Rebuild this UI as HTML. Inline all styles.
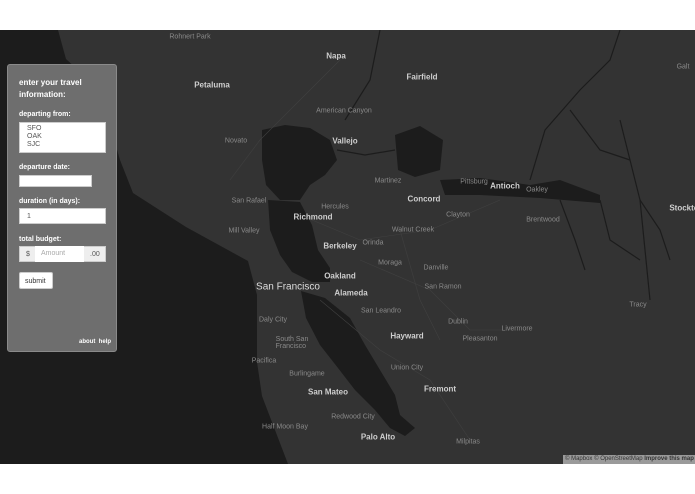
<!DOCTYPE html>
<html><head><meta charset="utf-8"><style>
html,body{margin:0;padding:0;width:695px;height:494px;overflow:hidden;background:#fff;font-family:"Liberation Sans",sans-serif}
#map{position:absolute;left:0;top:30px;width:695px;height:434px;background:#333;overflow:hidden}
svg{position:absolute;left:0;top:0}
.l{position:absolute;color:#8a8a8a;font-size:7px;white-space:nowrap;transform:translate(-50%,-50%)}
.b{color:#cfcfcf;font-size:8px;font-weight:bold}
.c{color:#ddd;font-size:10px}
#panel{position:absolute;left:7px;top:64px;width:110px;height:288px;background:#6e6e6e;border:1px solid #8a8a8a;border-radius:3px;box-sizing:border-box;color:#fff;font-size:7px;font-weight:bold}
.in{position:absolute;background:#fff;border:1px solid #ccc;box-sizing:border-box;color:#555;font-weight:normal}
#attr{position:absolute;left:563px;top:455px;width:132px;height:9px;background:#9a9a9a;color:#333;font-size:6px;line-height:9px;padding-left:2px;box-sizing:border-box;white-space:nowrap}
</style></head><body>
<div id="map">
<svg width="695" height="434" viewBox="0 30 695 434">
<path fill="#1c1c1c" d="M0 30 L58 30 L66 59 L100 90 L120 160 L133 193 L186 227 L248 261 L257 295 L257 362 L262 396 L275 430 L288 464 L0 464 Z"/>
<path fill="#1c1c1c" d="M262 130 L285 125 L310 128 L330 140 L337 160 L325 175 L310 185 L300 200 L280 200 L266 185 L262 160 Z"/>
<path fill="#1c1c1c" d="M268 200 L300 202 L312 225 L318 250 L330 268 L330 282 L312 282 L292 272 L280 255 L270 230 Z"/>
<path fill="#1c1c1c" d="M301 291 L325 298 L350 318 L365 345 L380 370 L395 395 L400 415 L415 428 L405 436 L390 428 L375 410 L355 390 L338 368 L320 345 L306 318 Z"/>
<path fill="#1c1c1c" d="M395 135 L420 126 L443 140 L440 170 L415 177 L398 170 Z"/>
<path fill="#1c1c1c" d="M440 180 L480 178 L530 185 L560 180 L600 195 L600 203 L540 198 L480 195 L445 195 Z"/>
<g stroke="#1c1c1c" stroke-width="1.2" fill="none">
<path d="M530 180 L545 130 L580 90 L610 60 L620 30"/><path d="M560 200 L575 240 L585 270"/><path d="M600 200 L610 240 L640 260"/><path d="M640 200 L660 230 L670 260"/><path d="M337 150 L365 155 L395 150"/><path d="M380 30 L370 80 L345 120"/><path d="M620 120 L640 200 L650 300"/><path d="M570 110 L600 150 L630 160"/>
</g>
<g stroke="#404040" stroke-width="0.6" fill="none">
<path d="M300 215 L360 240 L430 230 L500 200"/><path d="M360 260 L430 290 L470 330 L520 330"/><path d="M320 300 L380 350 L430 380 L470 440"/><path d="M400 230 L420 300 L440 340"/><path d="M230 180 L260 140 L300 100 L340 60"/>
</g>
</svg>
<div class="l" style="left:190px;top:7px">Rohnert Park</div>
<div class="l b" style="left:336px;top:26px">Napa</div>
<div class="l b" style="left:212px;top:55px">Petaluma</div>
<div class="l b" style="left:422px;top:47px">Fairfield</div>
<div class="l" style="left:344px;top:81px">American Canyon</div>
<div class="l" style="left:683px;top:37px">Galt</div>
<div class="l" style="left:236px;top:111px">Novato</div>
<div class="l b" style="left:345px;top:111px">Vallejo</div>
<div class="l" style="left:335px;top:177px">Hercules</div>
<div class="l" style="left:388px;top:151px">Martinez</div>
<div class="l" style="left:474px;top:152px">Pittsburg</div>
<div class="l b" style="left:505px;top:156px">Antioch</div>
<div class="l" style="left:537px;top:160px">Oakley</div>
<div class="l b" style="left:424px;top:169px">Concord</div>
<div class="l b" style="left:684px;top:178px">Stockto</div>
<div class="l" style="left:249px;top:171px">San Rafael</div>
<div class="l b" style="left:313px;top:187px">Richmond</div>
<div class="l" style="left:458px;top:185px">Clayton</div>
<div class="l" style="left:543px;top:190px">Brentwood</div>
<div class="l" style="left:244px;top:201px">Mill Valley</div>
<div class="l" style="left:413px;top:200px">Walnut Creek</div>
<div class="l b" style="left:340px;top:216px">Berkeley</div>
<div class="l" style="left:373px;top:213px">Orinda</div>
<div class="l" style="left:390px;top:233px">Moraga</div>
<div class="l" style="left:436px;top:238px">Danville</div>
<div class="l b" style="left:340px;top:246px">Oakland</div>
<div class="l c" style="left:288px;top:257px">San Francisco</div>
<div class="l b" style="left:351px;top:263px">Alameda</div>
<div class="l" style="left:443px;top:257px">San Ramon</div>
<div class="l" style="left:381px;top:281px">San Leandro</div>
<div class="l" style="left:273px;top:290px">Daly City</div>
<div class="l" style="left:458px;top:292px">Dublin</div>
<div class="l" style="left:517px;top:299px">Livermore</div>
<div class="l" style="left:638px;top:275px">Tracy</div>
<div class="l b" style="left:407px;top:306px">Hayward</div>
<div class="l" style="left:480px;top:309px">Pleasanton</div>
<div class="l" style="left:292px;top:313px">South San<br>Francisco</div>
<div class="l" style="left:264px;top:331px">Pacifica</div>
<div class="l" style="left:407px;top:338px">Union City</div>
<div class="l" style="left:307px;top:344px">Burlingame</div>
<div class="l b" style="left:328px;top:362px">San Mateo</div>
<div class="l b" style="left:440px;top:359px">Fremont</div>
<div class="l" style="left:353px;top:387px">Redwood City</div>
<div class="l" style="left:285px;top:397px">Half Moon Bay</div>
<div class="l b" style="left:378px;top:407px">Palo Alto</div>
<div class="l" style="left:468px;top:412px">Milpitas</div>
</div>
<div id="panel">
<div style="position:absolute;left:11px;top:12px;line-height:12px;font-size:8px">enter your travel<br>information:</div>
<div style="position:absolute;left:11px;top:46px">departing from:</div>
<div class="in" style="left:11px;top:57px;width:87px;height:31px;padding:2px 7px;line-height:8px;font-size:7px">SFO<br>OAK<br>SJC</div>
<div style="position:absolute;left:11px;top:99px">departure date:</div>
<div class="in" style="left:11px;top:110px;width:73px;height:12px"></div>
<div style="position:absolute;left:11px;top:133px">duration (in days):</div>
<div class="in" style="left:11px;top:143px;width:87px;height:16px;padding:4px 7px;font-size:7px">1</div>
<div style="position:absolute;left:11px;top:171px">total budget:</div>
<div class="in" style="left:11px;top:181px;width:87px;height:16px;background:#eee;font-size:7px">
<span style="position:absolute;left:6px;top:4px">$</span>
<div style="position:absolute;left:15px;top:-1px;width:49px;height:16px;background:#fff;color:#aaa;padding:4px 6px;box-sizing:border-box">Amount</div>
<span style="position:absolute;left:70px;top:4px">.00</span></div>
<div class="in" style="left:11px;top:207px;width:34px;height:17px;color:#333;font-size:7px;padding:5px 5px;border-radius:2px">submit</div>
<div style="position:absolute;left:71px;top:274px;font-size:6px">about &nbsp;help</div>
</div>
<div id="attr">© Mapbox © OpenStreetMap <b>Improve this map</b></div>
</body></html>
